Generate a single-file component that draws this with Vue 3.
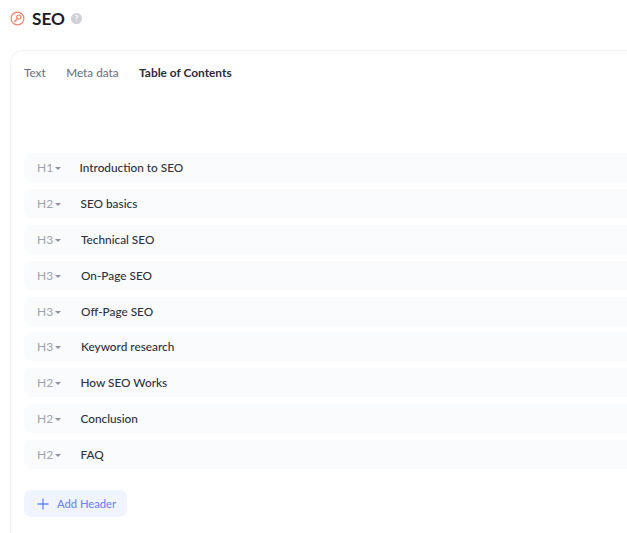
<script setup>
const rows = [
  ['H1', 'Introduction to SEO'],
  ['H2', 'SEO basics'],
  ['H3', 'Technical SEO'],
  ['H3', 'On-Page SEO'],
  ['H3', 'Off-Page SEO'],
  ['H3', 'Keyword research'],
  ['H2', 'How SEO Works'],
  ['H2', 'Conclusion'],
  ['H2', 'FAQ']
]
</script>

<template>
  <div class="page">
    <header class="head">
      <svg class="logo" width="15" height="15" viewBox="0 0 15 15" fill="none" stroke="#f4806e" stroke-width="1.2">
        <circle cx="7.5" cy="7.5" r="6.4" />
        <circle cx="8.8" cy="6.1" r="2.1" />
        <path d="M7.3 7.6 4.2 10.7M5.4 9.5l1 1" />
      </svg>
      <h1 class="title">SEO</h1>
      <span class="help">?</span>
    </header>
    <section class="card">
      <nav class="tabs">
        <span class="tab">Text</span>
        <span class="tab">Meta data</span>
        <span class="tab active">Table of Contents</span>
      </nav>
      <div class="rows">
        <div v-for="r in rows" :key="r[1]" class="row">
          <span class="level">{{ r[0] }}</span>
          <span class="caret"></span>
          <span class="name" :class="'lv' + r[0][1]">{{ r[1] }}</span>
        </div>
      </div>
      <button class="add">
        <svg width="12" height="12" viewBox="0 0 12 12" stroke="#6b86f5" stroke-width="1.3"><path d="M6 .5v11M.5 6h11" /></svg>
        <span>Add Header</span>
      </button>
    </section>
  </div>
</template>

<style>
html, body { margin: 0; background: #fff; overflow: hidden; }
</style>

<style scoped>
.page {
  width: 627px;
  height: 533px;
  overflow: hidden;
  font-family: Lato, "Noto Sans", sans-serif;
  background: #fff;
}
.head {
  display: flex;
  align-items: center;
  height: 36px;
  padding-left: 10px;
}
.logo { flex: none; }
.title {
  margin: 0 0 0 7px;
  font-size: 17.2px;
  font-weight: 700;
  color: #1d1e26;
}
.help {
  width: 11px;
  height: 11px;
  margin-left: 6px;
  border-radius: 50%;
  background: #cfd1d8;
  color: #fff;
  font-size: 8px;
  font-weight: 700;
  line-height: 11px;
  text-align: center;
}
.card {
  box-sizing: border-box;
  width: 640px;
  height: 500px;
  margin: 14px 0 0 10px;
  padding: 0 0 0 13px;
  border: 1.5px solid #f2f3f7;
  border-radius: 12px;
}
.tabs {
  display: flex;
  gap: 20.5px;
  padding-top: 14px;
  height: 88px;
  font-size: 11.7px;
  line-height: 15px;
}
.tab { color: #6f7380; font-weight: 500; }
.tab.active { color: #2a2c38; font-weight: 700; font-size: 11.9px; }
.rows {
  display: flex;
  flex-direction: column;
  gap: 6.9px;
}
.row {
  display: flex;
  align-items: center;
  height: 29px;
  padding-left: 13px;
  background: #fafbfd;
  border-radius: 8px;
}
.level {
  width: 13px;
  font-size: 12px;
  color: #a0a2a9;
}
.caret {
  width: 0;
  height: 0;
  margin: 2px 0 0 5px;
  border: 3px solid transparent;
  border-top: 3px solid #8f929d;
  border-bottom: 0;
}
.name {
  font-size: 11.8px;
  font-weight: 500;
  color: #2e303b;
}
.lv1 { margin-left: 18.5px; }
.lv2 { margin-left: 19.5px; }
.lv3 { margin-left: 20px; }
.add {
  display: flex;
  align-items: center;
  gap: 8px;
  width: 103px;
  height: 27px;
  margin-top: 21px;
  padding: 0 0 0 13px;
  border: 0;
  border-radius: 7px;
  background: #f0f4ff;
  color: #6b86f5;
  font: 500 11.2px Lato, "Noto Sans", sans-serif;
}
</style>
